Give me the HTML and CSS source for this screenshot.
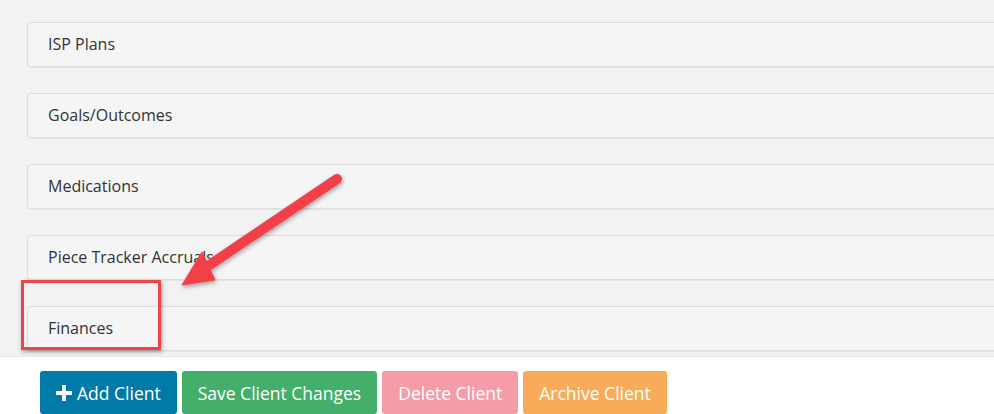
FILE: index.html
```html
<!DOCTYPE html>
<html>
<head>
<meta charset="utf-8">
<link rel="stylesheet" href="styles.css">
</head>
<body>
<div class="page">
  <div class="panels">
    <div class="panel"><div class="panel-heading">ISP Plans</div></div>
    <div class="panel"><div class="panel-heading">Goals/Outcomes</div></div>
    <div class="panel"><div class="panel-heading">Medications</div></div>
    <div class="panel"><div class="panel-heading">Piece Tracker Accruals</div></div>
    <div class="panel"><div class="panel-heading">Finances</div></div>
  </div>
  <div class="actions">
    <button class="btn btn-blue"><svg class="plus" viewBox="0 0 16 16" width="16" height="16"><path d="M6 0h4v6h6v4h-6v6h-4v-6h-6v-4h6z" fill="#fff"/></svg>Add Client</button>
    <button class="btn btn-green">Save Client Changes</button>
    <button class="btn btn-pink">Delete Client</button>
    <button class="btn btn-orange">Archive Client</button>
  </div>
  <div class="highlight"></div>
  <svg class="arrow" width="994" height="414" viewBox="0 0 994 414">
    <defs>
      <filter id="sh" x="-20%" y="-20%" width="140%" height="140%">
        <feDropShadow dx="1" dy="2" stdDeviation="2" flood-color="#000" flood-opacity="0.35"/>
      </filter>
    </defs>
    <g filter="url(#sh)" fill="#f2414a" stroke="#f2414a">
      <line x1="337" y1="179" x2="205" y2="268" stroke-width="10" stroke-linecap="round"/>
      <polygon points="182,285 202,252 215,280" stroke-width="1" stroke-linejoin="round"/>
    </g>
  </svg>
</div>
</body>
</html>
```
FILE: styles.css
```css
html, body {
  margin: 0;
  padding: 0;
  background: #ffffff;
  font-family: "Open Sans", "Liberation Sans", sans-serif;
}
.page {
  position: relative;
  width: 994px;
  height: 414px;
  overflow: hidden;
}
.panels {
  height: 357px;
  background: #f2f2f2;
  border-bottom: 1px solid #e8e8e8;
  box-sizing: border-box;
  padding: 22px 0 0 27px;
  overflow: hidden;
  display: flex;
  flex-direction: column;
  gap: 26px;
}
.panel {
  flex: none;
  margin-right: -20px;
  background: #f5f5f5;
  border: 1px solid #dddddd;
  border-radius: 4px;
  box-shadow: 0 1px 1px rgba(0,0,0,0.06);
}
.panel-heading {
  height: 43px;
  line-height: 43px;
  padding-left: 20px;
  font-size: 16px;
  font-weight: 500;
  color: #333333;
}
.actions {
  display: flex;
  gap: 5px;
  padding: 14px 0 0 40px;
}
.btn {
  display: flex;
  align-items: center;
  gap: 5px;
  height: 43px;
  border: none;
  border-radius: 3px;
  padding: 0 16px;
  font-family: "Open Sans", "Liberation Sans", sans-serif;
  font-size: 17.5px;
  color: #ffffff;
}
.btn-blue { background: #007aa7; }
.btn-green { background: #44ae6b; }
.btn-pink { background: #f49da7; }
.btn-orange { background: #f8ab59; }
.plus { flex: none; }
.highlight {
  position: absolute;
  left: 21px;
  top: 280px;
  width: 140px;
  height: 70px;
  box-sizing: border-box;
  border: 3px solid #f0444a;
  box-shadow: 1px 2px 4px rgba(0,0,0,0.35);
}
.arrow {
  position: absolute;
  left: 0;
  top: 0;
}
```
